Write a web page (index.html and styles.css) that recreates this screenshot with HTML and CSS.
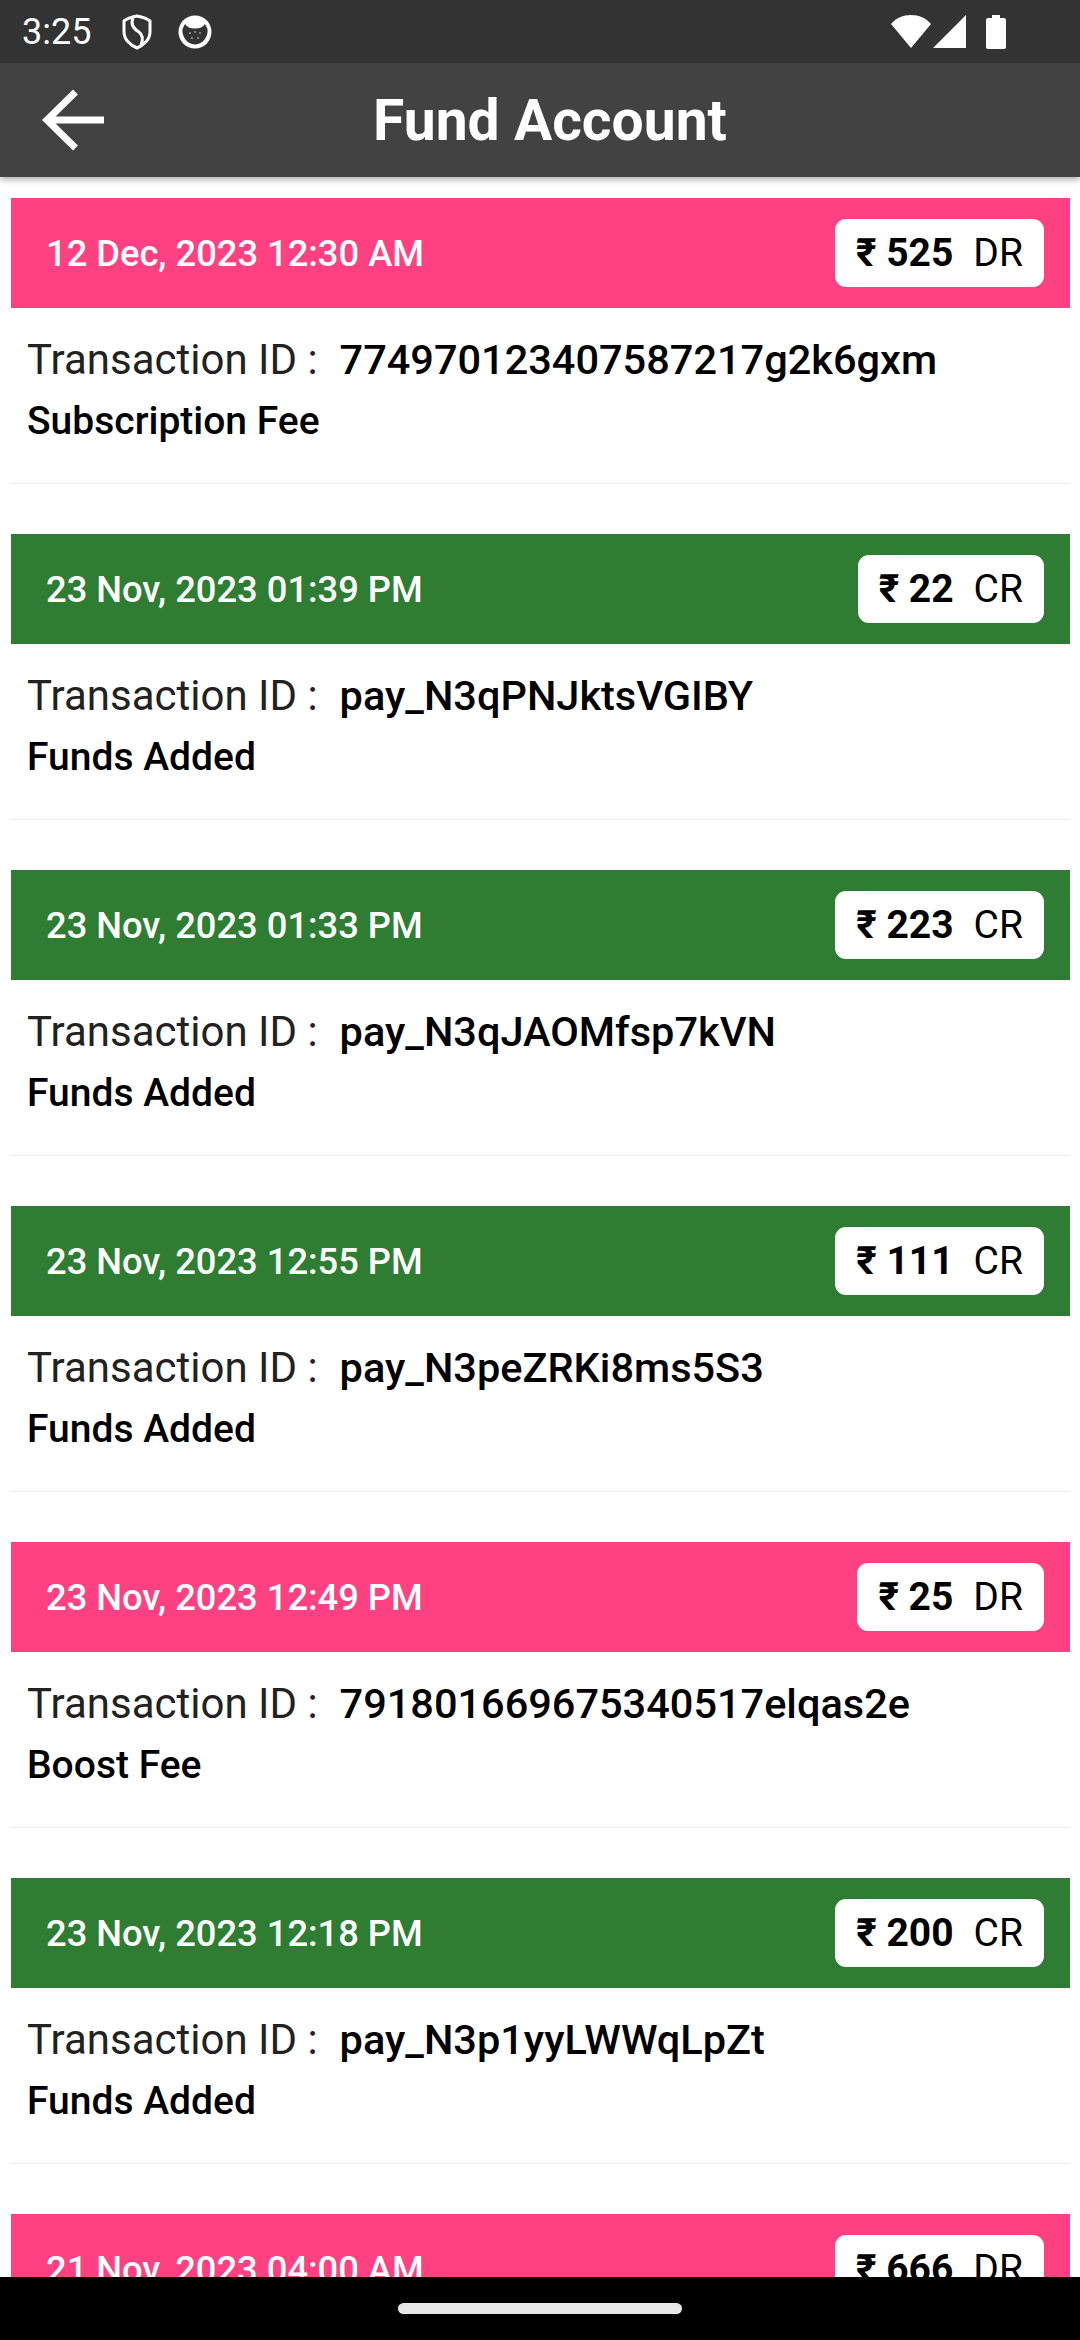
FILE: index.html
```html
<html>
<head>
    <title>Fund Account</title>
    <link rel="stylesheet" href="styles.css">
</head>
<body>
    <div class="screen">
        <div class="statusbar">
            <div class="status-left">
                <span class="time">3:25</span>
                <svg class="ic-shield" width="30" height="36" viewBox="0 0 30 36">
                    <path d="M15 2 C20 3 25 4.500 28 7 L28 18 C28 26 21 31.500 15 34 C9 31.500 2 26 2 18 L2 7 C5 4.500 10 3 15 2 Z" fill="none" stroke="#fff" stroke-width="3" stroke-linejoin="round"/>
                    <path d="M11 4 C8 11 12 15 17 18 C21 21 21 26 19 31" fill="none" stroke="#fff" stroke-width="3"/>
                </svg>
                <svg class="ic-cat" width="34" height="34" viewBox="0 0 34 34">
                    <circle cx="17" cy="17" r="16.500" fill="#fff"/>
                    <path d="M4.500 14 L7 9 C9 12 12 13.500 17 13.500 C22 13.500 25 12 27 9 L29.500 14 C30.500 21 25 29.500 17 29.500 C9 29.500 3.500 21 4.500 14 Z" fill="#333"/>
                    <circle cx="12" cy="18" r="1" fill="#999"/>
                    <circle cx="17" cy="17" r="1" fill="#999"/>
                    <circle cx="22" cy="18" r="1" fill="#999"/>
                    <circle cx="14" cy="23" r="1" fill="#999"/>
                    <circle cx="20" cy="23" r="1" fill="#999"/>
                </svg>
            </div>
            <div class="status-right">
                <svg width="40" height="33" viewBox="0 0 40 33"><path d="M0 9 C5 3 12 0 20 0 C28 0 35 3 40 9 L20 33 Z" fill="#fff"/></svg>
                <svg width="33" height="33" viewBox="0 0 33 33"><path d="M33 0 L33 33 L0 33 Z" fill="#fff"/></svg>
                <svg class="ic-batt" width="20" height="34" viewBox="0 0 20 34"><path d="M6 0 L14 0 L14 3 L18 3 Q20 3 20 5 L20 32 Q20 34 18 34 L2 34 Q0 34 0 32 L0 5 Q0 3 2 3 L6 3 Z" fill="#fff"/></svg>
            </div>
        </div>

        <div class="appbar">
            <div class="back">
                <svg width="62" height="62" viewBox="0 0 62 62">
                    <path d="M4 31 L62 31 M33.500 3 L5 31 L33.500 59" fill="none" stroke="#fff" stroke-width="7"/>
                </svg>
            </div>
            <div class="title">Fund Account</div>
        </div>

        <div class="list">
            <div class="card">
                <div class="card-head debit">
                    <span class="date">12 Dec, 2023 12:30 AM</span>
                    <span class="badge"><b>₹ 525</b><span class="kind">DR</span></span>
                </div>
                <div class="card-body">
                    <div class="txn"><span class="label">Transaction ID :</span><span class="value">774970123407587217g2k6gxm</span></div>
                    <div class="note">Subscription Fee</div>
                </div>
            </div>

            <div class="card">
                <div class="card-head credit">
                    <span class="date">23 Nov, 2023 01:39 PM</span>
                    <span class="badge"><b>₹ 22</b><span class="kind">CR</span></span>
                </div>
                <div class="card-body">
                    <div class="txn"><span class="label">Transaction ID :</span><span class="value">pay_N3qPNJktsVGIBY</span></div>
                    <div class="note">Funds Added</div>
                </div>
            </div>

            <div class="card">
                <div class="card-head credit">
                    <span class="date">23 Nov, 2023 01:33 PM</span>
                    <span class="badge"><b>₹ 223</b><span class="kind">CR</span></span>
                </div>
                <div class="card-body">
                    <div class="txn"><span class="label">Transaction ID :</span><span class="value">pay_N3qJAOMfsp7kVN</span></div>
                    <div class="note">Funds Added</div>
                </div>
            </div>

            <div class="card">
                <div class="card-head credit">
                    <span class="date">23 Nov, 2023 12:55 PM</span>
                    <span class="badge"><b>₹ 111</b><span class="kind">CR</span></span>
                </div>
                <div class="card-body">
                    <div class="txn"><span class="label">Transaction ID :</span><span class="value">pay_N3peZRKi8ms5S3</span></div>
                    <div class="note">Funds Added</div>
                </div>
            </div>

            <div class="card">
                <div class="card-head debit">
                    <span class="date">23 Nov, 2023 12:49 PM</span>
                    <span class="badge"><b>₹ 25</b><span class="kind">DR</span></span>
                </div>
                <div class="card-body">
                    <div class="txn"><span class="label">Transaction ID :</span><span class="value">791801669675340517elqas2e</span></div>
                    <div class="note">Boost Fee</div>
                </div>
            </div>

            <div class="card">
                <div class="card-head credit">
                    <span class="date">23 Nov, 2023 12:18 PM</span>
                    <span class="badge"><b>₹ 200</b><span class="kind">CR</span></span>
                </div>
                <div class="card-body">
                    <div class="txn"><span class="label">Transaction ID :</span><span class="value">pay_N3p1yyLWWqLpZt</span></div>
                    <div class="note">Funds Added</div>
                </div>
            </div>

            <div class="card">
                <div class="card-head debit">
                    <span class="date">21 Nov, 2023 04:00 AM</span>
                    <span class="badge"><b>₹ 666</b><span class="kind">DR</span></span>
                </div>
            </div>
        </div>

        <div class="navbar">
            <div class="pill"></div>
        </div>
    </div>
</body>
</html>
```

FILE: styles.css
```css
html, body {
    margin: 0;
    padding: 0;
}

body {
    background-color: white;
    font-family: Roboto, "Liberation Sans", sans-serif;
}

.screen {
    width: 1080px;
    height: 2340px;
    display: flex;
    flex-direction: column;
    overflow: hidden;
}

.statusbar {
    height: 63px;
    flex: none;
    background-color: #333333;
    color: white;
    display: flex;
    justify-content: space-between;
    align-items: center;
    padding: 0 74px 0 22px;
    box-sizing: border-box;
}

.status-left, .status-right {
    display: flex;
    align-items: center;
}

.status-right {
    gap: 2px;
}

.time {
    font-size: 36px;
    width: 100px;
}

.ic-cat {
    margin-left: 26px;
}

.ic-batt {
    margin-left: 18px;
}

.appbar {
    height: 114px;
    flex: none;
    background-color: #424242;
    color: white;
    display: flex;
    align-items: center;
    position: relative;
    box-shadow: 0 3px 6px rgba(0, 0, 0, 0.3);
}

.back {
    width: 113px;
    display: flex;
    padding-left: 42px;
    box-sizing: border-box;
}

.title {
    flex: 1;
    text-align: center;
    font-size: 57px;
    font-weight: 700;
    padding-right: 93px;
}

.list {
    flex: 1;
    overflow: hidden;
    padding: 21px 10px 0 11px;
}

.card {
    margin-bottom: 50px;
    border-bottom: 1px solid #eeeeee;
}

.card-head {
    height: 110px;
    display: flex;
    justify-content: space-between;
    align-items: center;
    padding: 0 26px 0 35px;
    box-sizing: border-box;
}

.debit {
    background-color: #ff4081;
}

.credit {
    background-color: #2e7d32;
}

.date {
    color: white;
    font-size: 36.300px;
    font-weight: 500;
}

.badge {
    height: 68px;
    background-color: white;
    border-radius: 11px;
    padding: 0 21px;
    display: flex;
    align-items: center;
    font-size: 39px;
    color: black;
}

.badge b {
    font-weight: 700;
}

.kind {
    font-size: 39px;
    margin-left: 20px;
}

.card-body {
    padding: 20px 16px 0;
    height: 175px;
    box-sizing: border-box;
}

.txn {
    height: 62px;
    display: flex;
    align-items: center;
    font-size: 42px;
}

.label {
    color: #222222;
    margin-right: 22px;
}

.value {
    font-weight: 500;
    font-size: 41.500px;
    color: black;
}

.note {
    font-size: 39px;
    font-weight: 500;
    color: black;
    line-height: 60px;
    margin-top: 1px;
}

.navbar {
    height: 63px;
    flex: none;
    background-color: black;
    display: flex;
    justify-content: center;
    padding-top: 26px;
    box-sizing: border-box;
}

.pill {
    width: 284px;
    height: 11px;
    border-radius: 6px;
    background-color: #e8e8e8;
}
```
